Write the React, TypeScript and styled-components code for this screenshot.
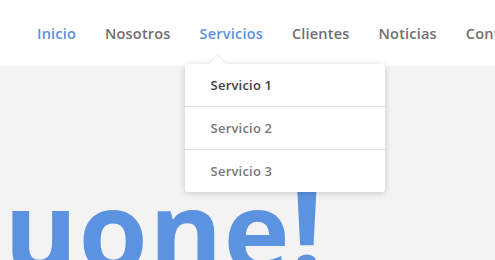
import styled, { createGlobalStyle } from "styled-components";

const GlobalStyle = createGlobalStyle`
  html, body {
    margin: 0;
    padding: 0;
    width: 495px;
    height: 260px;
    overflow: hidden;
    background: #f3f3f3;
  }
  body {
    font-family: "Open Sans", "Noto Sans", sans-serif;
  }
`;

const Page = styled.div`
  position: relative;
  width: 495px;
  height: 260px;
  overflow: hidden;
  background: #f3f3f3;
`;

const Header = styled.header`
  height: 66px;
  background: #ffffff;
  display: flex;
  align-items: center;
  padding-left: 37px;
  box-sizing: border-box;
`;

const Nav = styled.nav`
  display: flex;
  gap: 29px;
  white-space: nowrap;
`;

const NavItem = styled.div<{ active?: boolean }>`
  position: relative;
  font-size: 14.5px;
  font-weight: 600;
  letter-spacing: 0.2px;
  color: ${({ active }) => (active ? "#5b8fdf" : "#6f6f6f")};
`;

const Dropdown = styled.div`
  position: absolute;
  top: 40px;
  left: -15px;
  width: 200px;
  background: #ffffff;
  border-radius: 3px;
  box-shadow: 0 1px 6px rgba(0, 0, 0, 0.18);
  &::before {
    content: "";
    position: absolute;
    top: -6px;
    left: 27px;
    width: 11px;
    height: 11px;
    background: #ffffff;
    transform: rotate(45deg);
    box-shadow: -1px -1px 2px rgba(0, 0, 0, 0.08);
  }
`;

const DropItem = styled.div<{ dark?: boolean }>`
  position: relative;
  height: 42px;
  display: flex;
  align-items: center;
  padding-left: 26px;
  font-size: 13px;
  font-weight: 600;
  letter-spacing: 0.2px;
  color: ${({ dark }) => (dark ? "#3e3e3e" : "#777777")};
  & + & {
    border-top: 1px solid #e2e2e2;
  }
`;

const Hero = styled.div`
  padding-left: 4px;
  margin-top: 107px;
  font-size: 112px;
  font-weight: 700;
  color: #5b93e1;
  line-height: 1;
  letter-spacing: 1px;
`;

export default function App() {
  return (
    <Page>
      <GlobalStyle />
      <Header>
        <Nav>
          <NavItem active>Inicio</NavItem>
          <NavItem>Nosotros</NavItem>
          <NavItem active>
            Servicios
            <Dropdown>
              <DropItem dark>Servicio 1</DropItem>
              <DropItem>Servicio 2</DropItem>
              <DropItem>Servicio 3</DropItem>
            </Dropdown>
          </NavItem>
          <NavItem>Clientes</NavItem>
          <NavItem>Noticias</NavItem>
          <NavItem>Contacto</NavItem>
        </Nav>
      </Header>
      <Hero>uone!</Hero>
    </Page>
  );
}
